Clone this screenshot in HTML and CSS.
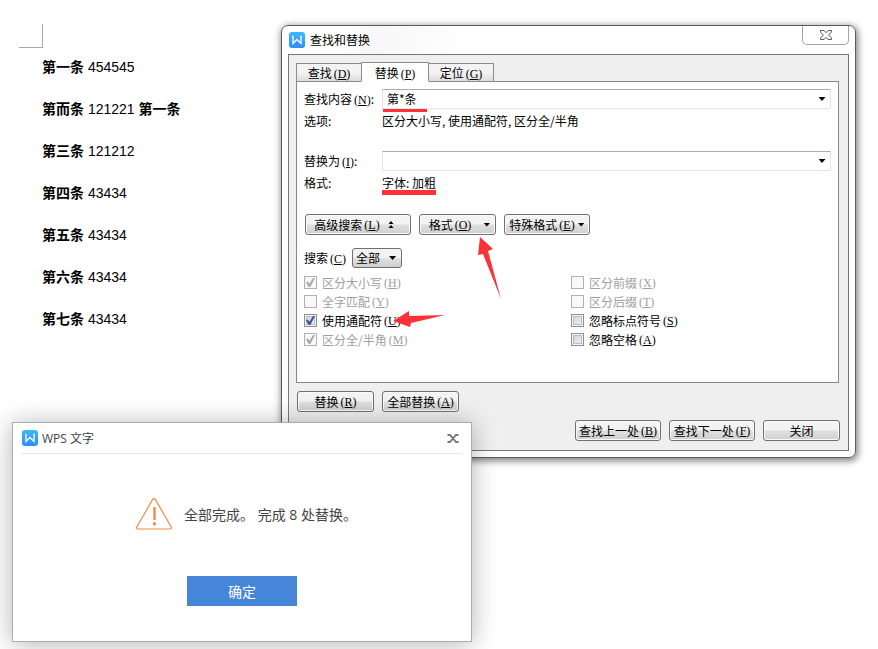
FILE: index.html
```html
<!DOCTYPE html>
<html lang="zh-CN">
<head>
<meta charset="utf-8">
<title>查找和替换</title>
<link rel="stylesheet" href="styles.css">
</head>
<body>
<main class="document">
  <div class="page-corner"></div>
  <div class="paragraphs">
    <p><b>第一条</b> 454545</p>
    <p><b>第而条</b> 121221 <b>第一条</b></p>
    <p><b>第三条</b> 121212</p>
    <p><b>第四条</b> 43434</p>
    <p><b>第五条</b> 43434</p>
    <p><b>第六条</b> 43434</p>
    <p><b>第七条</b> 43434</p>
  </div>
</main>

<section class="dialog" aria-labelledby="dialog-title">
  <header class="dialog-header">
    <svg class="logo" viewBox="0 0 16 16" aria-hidden="true">
      <defs><linearGradient id="logo-fill" x1="0" y1="0" x2="0" y2="1"><stop offset="0" stop-color="#3db8fb"/><stop offset="1" stop-color="#2f8efb"/></linearGradient></defs>
      <rect width="16" height="16" rx="3" fill="url(#logo-fill)"/>
      <path d="M3 4.5H4V11.5L8 7.5L12 11.5V4.5H13" fill="none" stroke="#fff" stroke-width="1.3"/>
    </svg>
    <h1 id="dialog-title">查找和替换</h1>
    <button class="dialog-close" type="button" aria-label="关闭窗口">
      <svg viewBox="0 0 12 10" aria-hidden="true"><path d="M.5.5H4L6 2.7L8 .5H11.5V2L8.6 5L11.5 8V9.5H8L6 7.3L4 9.5H.5V8L3.4 5L.5 2Z" fill="#fff" stroke="#555a68"/></svg>
    </button>
  </header>

  <div class="dialog-body">
    <nav class="tabs" role="tablist">
      <button class="tab" type="button" role="tab">查找<span class="key">(<u>D</u>)</span></button>
      <button class="tab tab-active" type="button" role="tab" aria-selected="true">替换<span class="key">(<u>P</u>)</span></button>
      <button class="tab" type="button" role="tab">定位<span class="key">(<u>G</u>)</span></button>
    </nav>

    <div class="panel">
      <div class="fields">
        <label for="find-text">查找内容<span class="key">(<u>N</u>)</span>:</label>
        <div class="combo mark mark-find">
          <input id="find-text" type="text" value="第*条">
          <button type="button" aria-label="查找记录"><i class="arrow"></i></button>
        </div>
        <span>选项:</span>
        <span>区分大小写, 使用通配符, 区分全/半角</span>
        <label class="second" for="replace-text">替换为<span class="key">(<u>I</u>)</span>:</label>
        <div class="combo second">
          <input id="replace-text" type="text">
          <button type="button" aria-label="替换记录"><i class="arrow"></i></button>
        </div>
        <span>格式:</span>
        <span><span class="mark mark-format">字体: 加粗</span></span>
      </div>

      <div class="tools">
        <button class="btn btn-large" type="button">高级搜索<span class="key">(<u>L</u>)</span><svg class="collapse" viewBox="0 0 6 8" aria-hidden="true"><path d="M3 0L5.5 3H.5ZM3 4L5.5 7H.5Z"/></svg></button>
        <button class="btn btn-arrow" type="button">格式<span class="key">(<u>O</u>)</span><i class="arrow"></i>
          <svg class="pointer-format" viewBox="0 0 25 64" aria-hidden="true"><path d="M3 1L16 13L11 15L24 63L6 18L1 19Z"/></svg>
        </button>
        <button class="btn btn-wide" type="button">特殊格式<span class="key">(<u>E</u>)</span><i class="arrow"></i></button>
      </div>

      <div class="scope">
        <label for="scope">搜索<span class="key">(<u>C</u>)</span></label>
        <div class="select"><select id="scope"><option>全部</option></select><i class="arrow"></i></div>
      </div>

      <div class="options">
        <label class="off"><input type="checkbox" checked disabled>区分大小写<span class="key">(<u>H</u>)</span></label>
        <label class="off"><input type="checkbox" disabled>区分前缀<span class="key">(<u>X</u>)</span></label>
        <label class="off"><input type="checkbox" disabled>全字匹配<span class="key">(<u>Y</u>)</span></label>
        <label class="off"><input type="checkbox" disabled>区分后缀<span class="key">(<u>T</u>)</span></label>
        <label><input type="checkbox" checked>使用通配符<span class="key">(<u>U</u>)</span>
          <svg class="pointer-wildcard" viewBox="0 0 54 18" aria-hidden="true"><path d="M1 11L17 1V6L53 5L19 13L18 17Z"/></svg>
        </label>
        <label><input type="checkbox">忽略标点符号<span class="key">(<u>S</u>)</span></label>
        <label class="off"><input type="checkbox" checked disabled>区分全/半角<span class="key">(<u>M</u>)</span></label>
        <label><input type="checkbox">忽略空格<span class="key">(<u>A</u>)</span></label>
      </div>
    </div>

    <div class="actions">
      <button class="btn" type="button">替换<span class="key">(<u>R</u>)</span></button>
      <button class="btn" type="button">全部替换<span class="key">(<u>A</u>)</span></button>
    </div>
    <div class="actions actions-end">
      <button class="btn btn-wide" type="button">查找上一处<span class="key">(<u>B</u>)</span></button>
      <button class="btn btn-wide" type="button">查找下一处<span class="key">(<u>F</u>)</span></button>
      <button class="btn" type="button">关闭</button>
    </div>
  </div>
</section>

<section class="alert" role="alertdialog" aria-labelledby="alert-title">
  <header class="alert-header">
    <svg class="logo" viewBox="0 0 16 16" aria-hidden="true">
      <rect width="16" height="16" rx="3" fill="url(#logo-fill)"/>
      <path d="M3 4.5H4V11.5L8 7.5L12 11.5V4.5H13" fill="none" stroke="#fff" stroke-width="1.3"/>
    </svg>
    <h2 id="alert-title">WPS 文字</h2>
    <button class="alert-close" type="button" aria-label="关闭提示">
      <svg viewBox="0 0 12 9" aria-hidden="true"><path d="M.5 1H3L9 8H11.5M11.5 1H9L3 8H.5" fill="none" stroke="#777" stroke-width="1.8"/></svg>
    </button>
  </header>
  <div class="alert-message">
    <svg class="warning" viewBox="0 0 36 32" aria-hidden="true">
      <path d="M16.8 1.2Q18 0 19.2 1.2L35.2 29Q35.8 30.8 34 31H2Q.2 30.8.8 29Z" fill="none" stroke="#ee8c46" stroke-width="1.2"/>
      <path d="M18.5 9V22" stroke="#ee8c46" stroke-width="2.4"/><circle cx="18.5" cy="25.8" r="1.7" fill="#ee8c46"/>
    </svg>
    <p>全部完成。 完成 8 处替换。</p>
  </div>
  <button class="confirm" type="button">确定</button>
</section>
</body>
</html>
```
FILE: styles.css
```css
* {
  box-sizing: border-box;
}

body {
  margin: 0;
  min-height: 100vh;
  overflow: hidden;
  background: #fff;
  color: #000;
  font: 12px/20px "Noto Sans CJK SC", sans-serif;
}

button,
input,
select {
  margin: 0;
  padding: 0;
  border: 0;
  background: none;
  color: inherit;
  font: inherit;
}

h1,
h2,
p {
  margin: 0;
  font-size: inherit;
  font-weight: 400;
}

.logo {
  width: 16px;
  height: 16px;
}

/* Document */

.document {
  padding: 24px 19px;
  font: 14px/42px "Liberation Sans", "Noto Sans CJK SC", sans-serif;
}

.page-corner {
  width: 24px;
  height: 24px;
  border: solid #aaa;
  border-width: 0 1px 1px 0;
}

.paragraphs {
  margin-top: -2px;
  padding-left: 23px;
}

/* Find and replace window */

.dialog {
  position: absolute;
  top: 25px;
  left: 281px;
  right: 22px;
  min-width: 560px;
  border: 1px solid #5c5c5c;
  border-radius: 7px;
  background: linear-gradient(100deg, #fff 10%, #f7f7f7 14%, #fff 30%);
  box-shadow: 1px 2px 7px 1px rgba(0, 0, 0, 0.5);
}

.dialog-header {
  display: flex;
  align-items: center;
  gap: 5px;
  height: 28px;
  padding: 0 6px 0 7px;
}

.dialog-header h1,
.alert-header h2 {
  flex: 1;
}

.dialog-close {
  align-self: flex-start;
  display: grid;
  place-items: center;
  width: 47px;
  height: 19px;
  border: 1px solid #a3a3a3;
  border-top: 0;
  border-radius: 0 0 5px 5px;
}

.dialog-close svg {
  width: 12px;
  height: 10px;
}

.dialog-body {
  margin: 0 6px 6px;
  padding: 7px 9px 9px 7px;
  border: 1px solid #777;
  background: #efefef;
}

.key {
  margin-left: 2px;
  font-family: "Liberation Serif", serif;
  line-height: 12px;
}

.tabs {
  display: flex;
  align-items: flex-end;
  margin-bottom: -1px;
}

.tab {
  width: 66px;
  height: 19px;
  border: 1px solid #898c95;
  background: linear-gradient(#f3f3f3 50%, #dcdcdc);
  line-height: 17px;
  white-space: nowrap;
}

.tab-active {
  position: relative;
  width: 68px;
  height: 20px;
  margin: 0 -1px;
  border-bottom-color: #fff;
  background: #fff;
}

.panel {
  padding: 7px 7px 33px;
  border: 1px solid #828790;
  background: #fff;
}

.fields {
  display: grid;
  grid-template-columns: 78px 1fr;
  gap: 2px 0;
}

.second {
  margin-top: 18px;
}

.combo {
  display: flex;
  height: 20px;
  border: 1px solid #e2e3ea;
  border-top-color: #abadb3;
  border-radius: 1px;
}

.combo input {
  flex: 1;
  min-width: 0;
  padding: 0 4px;
}

.combo button {
  display: grid;
  place-items: center;
  width: 16px;
}

.arrow {
  width: 7px;
  height: 4px;
  background: #000;
  clip-path: polygon(0 0, 100% 0, 50% 100%);
}

.mark {
  position: relative;
}

.mark::after {
  content: "";
  position: absolute;
  left: 0;
  background: #fb3238;
}

.mark-find::after {
  top: 19px;
  width: 44px;
  height: 3px;
}

.mark-format::after {
  top: 16px;
  width: 100%;
  height: 5px;
}

.btn {
  position: relative;
  display: flex;
  align-items: center;
  justify-content: center;
  width: 77px;
  height: 21px;
  border: 1px solid #707070;
  border-radius: 3px;
  background: linear-gradient(#f3f3f3 45%, #dedede 55%, #cfcfcf);
  box-shadow: inset 0 0 0 1px #fafafa;
  line-height: 19px;
  white-space: nowrap;
}

.btn-large {
  width: 106px;
  padding-right: 8px;
}

.btn-wide {
  width: 86px;
}

.btn-large .collapse {
  width: 6px;
  height: 8px;
  margin-left: 8px;
}

.btn-arrow {
  padding-left: 4px;
}

.btn-arrow .arrow {
  margin-left: 12px;
}

.btn-wide .arrow {
  margin-left: 3px;
}

.tools,
.actions {
  display: flex;
  gap: 8px;
}

.tools {
  margin: 21px 0 0 1px;
}

.scope {
  display: flex;
  gap: 6px;
  margin-top: 13px;
}

.select {
  position: relative;
}

.select select {
  appearance: none;
  display: block;
  width: 50px;
  height: 20px;
  padding: 0 3px;
  border: 1px solid #707070;
  border-radius: 3px;
  background: linear-gradient(#f3f3f3 45%, #dedede 55%, #cfcfcf);
  line-height: 18px;
}

.select .arrow {
  position: absolute;
  top: 8px;
  right: 6px;
  pointer-events: none;
}

.options {
  display: grid;
  grid-template-columns: 1fr 1fr;
  column-gap: 7px;
  margin-top: 5px;
}

.options label {
  position: relative;
  display: flex;
  align-items: center;
  justify-self: start;
  height: 19px;
}

.options input {
  appearance: none;
  display: grid;
  place-items: center;
  width: 13px;
  height: 13px;
  margin-right: 5px;
  border: 1px solid #8e8f8f;
  background: linear-gradient(135deg, #cbcfd5, #f6f6f6);
  box-shadow: inset 0 0 0 1px #f4f4f4, inset 0 0 0 2px #b9bec6;
}

.options input:checked::before {
  content: "";
  width: 9px;
  height: 9px;
  background: #3c50a0;
  clip-path: polygon(0 48%, 20% 40%, 38% 65%, 78% 0, 100% 0, 48% 100%, 30% 100%);
}

.options .off {
  color: #a0a0a0;
}

.options .off input {
  border-color: #b1b1b1;
  background: #f8f8f8;
  box-shadow: none;
}

.options .off input::before {
  background: #aaa;
}

.pointer-format,
.pointer-wildcard {
  position: absolute;
  z-index: 1;
  fill: #fb3238;
  pointer-events: none;
}

.pointer-format {
  top: 21px;
  left: 57px;
  width: 25px;
  height: 64px;
}

.pointer-wildcard {
  top: -1px;
  left: 88px;
  width: 54px;
  height: 18px;
}

.actions {
  margin: 8px 0 0 1px;
}

.actions-end {
  justify-content: flex-end;
  margin-right: -1px;
}

/* Result message */

.alert {
  position: absolute;
  top: 422px;
  left: 12px;
  width: 460px;
  padding: 0 9px 35px;
  border: 1px solid #a9acb5;
  background: #fff;
  box-shadow: 0 2px 24px rgba(0, 0, 0, 0.3);
  color: #444;
  font-family: "Open Sans", "Noto Sans CJK SC", sans-serif;
}

.alert-header {
  display: flex;
  align-items: center;
  gap: 4px;
  height: 31px;
  border-bottom: 1px solid #e6e6e6;
}

.alert h2,
.alert p,
.confirm {
  padding-top: 2px;
}

.alert-close {
  display: grid;
  place-items: center;
  width: 18px;
  height: 20px;
}

.alert-close svg {
  width: 12px;
  height: 9px;
}

.alert-message {
  display: flex;
  align-items: center;
  gap: 12px;
  margin: 44px 0 46px 114px;
  font-size: 14px;
}

.warning {
  width: 36px;
  height: 32px;
}

.confirm {
  display: block;
  width: 110px;
  height: 30px;
  margin-left: 165px;
  background: #4586d8;
  color: #fff;
  font-size: 14px;
}
```
